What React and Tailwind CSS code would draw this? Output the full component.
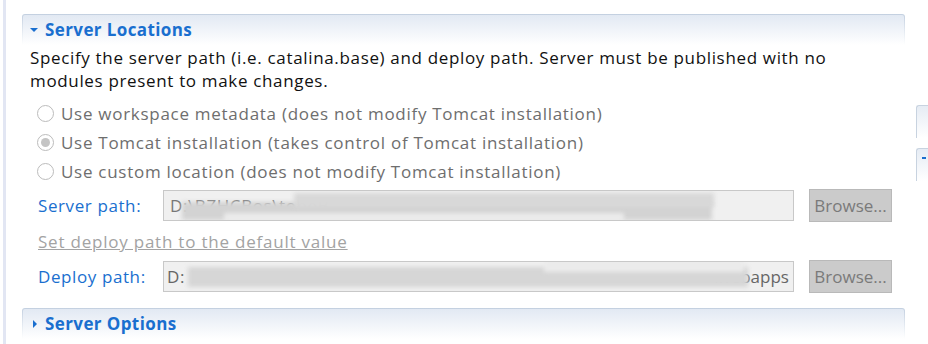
import React from 'react'

const font = { fontFamily: '"Open Sans", "Noto Sans", sans-serif' }

const SectionHeader = ({ title, open }) => (
    <div className="rounded-t-[3px] bg-gradient-to-b from-[#c3d0e0] to-white px-px pt-px">
        <div className="flex h-[30px] items-center rounded-t-[2px] bg-gradient-to-b from-[#e2e9f3] to-white pl-[6px]">
            {open ? (
                <svg width="8" height="6" viewBox="0 0 8 6" className="ml-[1px] mr-[7px]">
                    <path d="M0 1 L8 1 L4 5 Z" fill="#1a6fcf" />
                </svg>
            ) : (
                <svg width="6" height="8" viewBox="0 0 6 8" className="ml-[3px] mr-[7px]">
                    <path d="M1 0 L5 4 L1 8 Z" fill="#1a6fcf" />
                </svg>
            )}
            <span className="text-[17px] font-bold tracking-[0.4px] text-[#1a6fcf]">{title}</span>
        </div>
    </div>
)

const Radio = ({ checked, label }) => (
    <div className="flex h-[29px] items-center">
        <span className="flex h-[17px] w-[17px] items-center justify-center rounded-full border border-[#bcbcbc] bg-white">
            {checked && <span className="h-[9px] w-[9px] rounded-full bg-[#c4c4c4]" />}
        </span>
        <span className="ml-[7px] text-[17px] tracking-[0.72px] text-[#6e6e6e]">{label}</span>
    </div>
)

const Blur = ({ className }) => (
    <span className={`absolute blur-[2px] ${className}`} />
)

export default function App() {
    return (
        <div
            className="flex h-[344px] w-[928px] overflow-hidden bg-white text-black"
            style={font}
        >
            <div className="ml-[3px] w-[3px] bg-[#e2e6f3]" />

            <div className="ml-[16px] w-[886px] pt-[14px]">
                <SectionHeader title="Server Locations" open />

                <div className="pl-[8px] pt-[1px] text-[17px] leading-[23px] tracking-[0.66px] text-[#111]">
                    <p>
                        Specify the server path (i.e. catalina.base) and deploy path. Server must be published with no
                        <br />
                        modules present to make changes.
                    </p>
                </div>

                <div className="mt-[7px] pl-[15px]">
                    <Radio label="Use workspace metadata (does not modify Tomcat installation)" />
                    <Radio checked label="Use Tomcat installation (takes control of Tomcat installation)" />
                    <Radio label="Use custom location (does not modify Tomcat installation)" />
                </div>

                <div className="mt-[3px] flex items-center pl-[16px] tracking-[0.6px]">
                    <span className="w-[125px] text-[17px] text-[#1a6fcf]">Server path:</span>
                    <div className="relative h-[31px] w-[631px] overflow-hidden border border-[#c8c8c8] bg-[#f0f0f0] pl-[6px] text-[17px] leading-[29px] text-[#777]">
                        D:\BZHCBos\tobeB
                        <Blur className="left-[18px] top-[11px] h-[18px] w-[530px] bg-[#d3d3d3]" />
                        <Blur className="left-[130px] top-[2px] h-[14px] w-[420px] bg-[#d8d8d8]" />
                        <Blur className="left-[60px] top-[22px] h-[10px] w-[400px] bg-[#ebebeb]" />
                    </div>
                    <button className="ml-[15px] h-[33px] w-[83px] border border-[#b9b9b9] bg-[#cbcbcb] text-[17px] tracking-normal text-[#7a7a7a]">
                        Browse...
                    </button>
                </div>

                <div className="mt-[3px] h-[33px] pl-[16px] leading-[33px]">
                    <span className="text-[17px] tracking-[0.78px] text-[#a3a3a3] underline">
                        Set deploy path to the default value
                    </span>
                </div>

                <div className="mt-[2px] flex items-center pl-[16px] tracking-[0.6px]">
                    <span className="w-[125px] text-[17px] text-[#1a6fcf]">Deploy path:</span>
                    <div className="relative h-[31px] w-[631px] overflow-hidden border border-[#c8c8c8] bg-[#f0f0f0] pl-[3px] text-[17px] leading-[29px] text-[#666]">
                        <span>D:</span>
                        <span className="absolute right-[4px] top-0 tracking-normal text-[#666]">\webapps</span>
                        <Blur className="left-[24px] top-[5px] h-[20px] w-[560px] bg-[#d6d6d6]" />
                        <Blur className="left-[380px] top-[-6px] h-[16px] w-[200px] bg-[#ebebeb]" />
                    </div>
                    <button className="ml-[15px] h-[33px] w-[83px] border border-[#b9b9b9] bg-[#cbcbcb] text-[17px] tracking-normal text-[#7a7a7a]">
                        Browse...
                    </button>
                </div>

                <div className="mt-[15px]">
                    <SectionHeader title="Server Options" />
                </div>
            </div>

            <div className="ml-[11px] flex flex-col pt-[105px]">
                <div className="h-[33px] w-[12px] rounded-tl-[3px] border-l border-t border-[#c8d3e0] bg-gradient-to-b from-[#e6ecf4] to-white" />
                <div className="relative mt-[10px] h-[33px] w-[12px] rounded-tl-[3px] border-l border-t border-[#c8d3e0] bg-gradient-to-b from-[#e6ecf4] to-white">
                    <span className="absolute left-[5px] top-[8px] h-[2px] w-[4px] bg-[#1a6fcf]" />
                </div>
            </div>
        </div>
    )
}
